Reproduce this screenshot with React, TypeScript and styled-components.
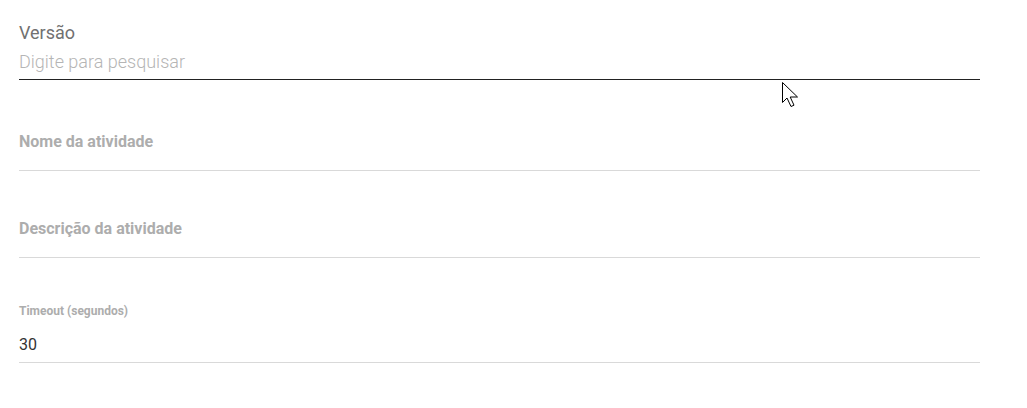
import styled, { createGlobalStyle } from "styled-components";

const GlobalStyle = createGlobalStyle`
  html, body {
    margin: 0;
    padding: 0;
    background: #fff;
  }
  body {
    font-family: Roboto, "Liberation Sans", Arial, sans-serif;
  }
`;

const Page = styled.div`
  position: relative;
  width: 1027px;
  height: 408px;
  box-sizing: border-box;
  padding: 22px 47px 0 19px;
  display: flex;
  flex-direction: column;
`;

// --- search field (Versão) ---
const SearchField = styled.div`
  display: flex;
  flex-direction: column;
`;

const SearchLabel = styled.label`
  font-size: 18px;
  line-height: 22px;
  color: #717171;
`;

const SearchInput = styled.input`
  height: 36px;
  box-sizing: border-box;
  padding: 0 0 1px;
  border: none;
  border-bottom: 1px solid #222;
  outline: none;
  background: transparent;
  font-family: inherit;
  font-size: 18px;
  font-weight: 300;
  color: #333;

  &::placeholder {
    color: #b5b5b5;
    font-weight: 300;
  }
`;

// --- material style inputs ---
const Field = styled.div<{ $top: number }>`
  display: flex;
  flex-direction: column;
  margin-top: ${(p) => p.$top}px;
  border-bottom: 1px solid #d9d9d9;
`;

const EmptyLabel = styled.span<{ $gap: number }>`
  font-size: 16px;
  line-height: 20px;
  font-weight: 700;
  color: #adadad;
  padding-bottom: ${(p) => p.$gap}px;
`;

const SmallLabel = styled.span`
  font-size: 12px;
  line-height: 14px;
  font-weight: 700;
  color: #adadad;
`;

const Value = styled.span`
  font-size: 16px;
  line-height: 20px;
  color: #333;
  padding: 17px 0 7px;
`;

const Cursor = styled.svg`
  position: absolute;
  left: 781px;
  top: 81px;
  pointer-events: none;
`;

export default function App() {
  return (
    <>
      <GlobalStyle />
      <Page>
        <SearchField>
          <SearchLabel>Versão</SearchLabel>
          <SearchInput placeholder="Digite para pesquisar" />
        </SearchField>

        <Field $top={52}>
          <EmptyLabel $gap={18}>Nome da atividade</EmptyLabel>
        </Field>

        <Field $top={48}>
          <EmptyLabel $gap={18}>Descrição da atividade</EmptyLabel>
        </Field>

        <Field $top={46}>
          <SmallLabel>Timeout (segundos)</SmallLabel>
          <Value>30</Value>
        </Field>

        <Cursor width="20" height="28" viewBox="0 0 20 28">
          <path
            d="M1.5 1.5 L1.5 21.5 L6 17 L10 25.5 L13 24.2 L9.2 16 L16.5 16 Z"
            fill="#fff"
            stroke="#000"
            strokeWidth="1"
            strokeLinejoin="miter"
          />
        </Cursor>
      </Page>
    </>
  );
}
